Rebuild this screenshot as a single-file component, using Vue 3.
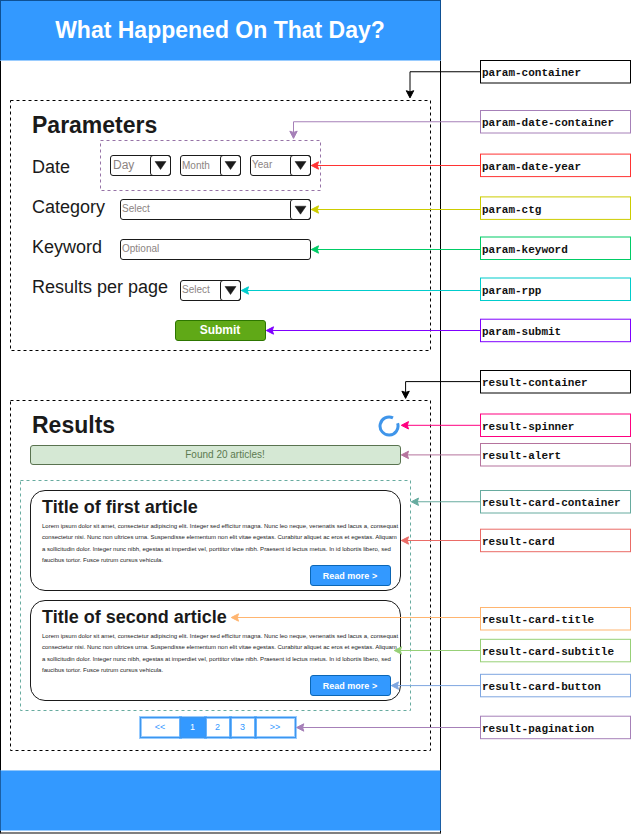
<script setup>
const lorem = [
  'Lorem ipsum dolor sit amet, consectetur adipiscing elit. Integer sed efficitur magna. Nunc leo neque, venenatis sed lacus a, consequat',
  'consectetur nisi. Nunc non ultrices urna. Suspendisse elementum non elit vitae egestas. Curabitur aliquet ac eros et egestas. Aliquam',
  'a sollicitudin dolor. Integer nunc nibh, egestas at imperdiet vel, porttitor vitae nibh. Praesent id lectus metus. In id lobortis libero, sed',
  'faucibus tortor. Fusce rutrum cursus vehicula.',
]
const articles = ['Title of first article', 'Title of second article']
const pages = [
  { text: '<<', cls: 'wide' },
  { text: '1', cls: 'on' },
  { text: '2', cls: '' },
  { text: '3', cls: '' },
  { text: '>>', cls: 'wide' },
]

// top: callout box, base: text baseline, y: connector height, x: arrow tip, down: tip height of a bent connector
const notes = [
  { name: 'param-container', color: '#000000', top: 60.5, base: 76, y: 71.75, x: 410, down: 98.5 },
  { name: 'param-date-container', color: '#a680b8', top: 110.5, base: 126, y: 121.75, x: 293.5, down: 139 },
  { name: 'param-date-year', color: '#ff3333', top: 154.1, base: 170, y: 165.5, x: 311.5 },
  { name: 'param-ctg', color: '#cccc00', top: 196.9, base: 213, y: 209.5, x: 311.5 },
  { name: 'param-keyword', color: '#00cc66', top: 237, base: 253, y: 249.5, x: 311.5 },
  { name: 'param-rpp', color: '#00cccc', top: 278, base: 294, y: 290.5, x: 241.5 },
  { name: 'param-submit', color: '#7f00ff', top: 319.2, base: 335, y: 330.5, x: 266.5 },
  { name: 'result-container', color: '#000000', top: 370.5, base: 386, y: 381.6, x: 405.6, down: 399 },
  { name: 'result-spinner', color: '#ff0080', top: 414, base: 430, y: 425.3, x: 401.5 },
  { name: 'result-alert', color: '#b5739d', top: 443.5, base: 459, y: 454.9, x: 401.5 },
  { name: 'result-card-container', color: '#67ab9f', top: 490.5, base: 506, y: 501.75, x: 411.5 },
  { name: 'result-card', color: '#ea6b66', top: 529.2, base: 545, y: 540.5, x: 401.5 },
  { name: 'result-card-title', color: '#ffb570', top: 607.5, base: 623, y: 617.5, x: 231.5 },
  { name: 'result-card-subtitle', color: '#97d077', top: 639.3, base: 655, y: 650.5, x: 394.5 },
  { name: 'result-card-button', color: '#7ea6e0', top: 674.3, base: 690, y: 685.6, x: 391.5 },
  { name: 'result-pagination', color: '#a680b8', top: 716.2, base: 732, y: 727.5, x: 296.8 },
]
const gapBefore = (i) => (i === 0 ? notes[0].base - 11 : notes[i].base - notes[i - 1].base - 16)
const line = (n) => (n.down ? `M480 ${n.y}H${n.x}V${n.down - 5}` : `M480 ${n.y}H${n.x + 5}`)
const head = (n) =>
  n.down
    ? `M${n.x} ${n.down - 0.6}l-3.7 -7.2l3.7 1.2l3.7 -1.2z`
    : `M${n.x - 0.2} ${n.y}l7.2 -3.7l-1.2 3.7l1.2 3.7z`
</script>

<template>
  <div class="sheet">
    <main class="mock">
      <header><h1>What Happened On That Day?</h1></header>

      <section class="panel params">
        <svg class="dash"><rect x=".5" y=".5" width="420" height="250" /></svg>
        <h2>Parameters</h2>
        <div class="row date">
          <label>Date</label>
          <div class="dates">
            <svg class="dash purple"><rect x=".5" y=".5" width="220" height="50" /></svg>
            <div class="field short day"><span>Day</span><i><svg viewBox="0 0 21 21"><path d="M5 6.5H16L10.5 14.5Z" /></svg></i></div>
            <div class="field short month"><span>Month</span><i><svg viewBox="0 0 21 21"><path d="M5 6.5H16L10.5 14.5Z" /></svg></i></div>
            <div class="field short year"><span>Year</span><i><svg viewBox="0 0 21 21"><path d="M5 6.5H16L10.5 14.5Z" /></svg></i></div>
          </div>
        </div>
        <div class="row">
          <label class="mid">Category</label>
          <div class="field long"><span>Select</span><i><svg viewBox="0 0 21 21"><path d="M5 7.2H16L10.5 15.2Z" /></svg></i></div>
        </div>
        <div class="row">
          <label class="mid">Keyword</label>
          <div class="field long"><span>Optional</span></div>
        </div>
        <div class="row rpp">
          <label>Results per page</label>
          <div class="field short"><span>Select</span><i><svg viewBox="0 0 21 21"><path d="M5 6.5H16L10.5 14.5Z" /></svg></i></div>
        </div>
        <button class="submit">Submit</button>
      </section>

      <section class="panel results">
        <svg class="dash"><rect x=".5" y=".5" width="420" height="350" /></svg>
        <div class="heading">
          <h2>Results</h2>
          <svg class="spinner" viewBox="0 0 22 22"><path d="M15 2.9A9 9 0 1 0 19.6 8.2" /></svg>
        </div>
        <div class="alert">Found 20 articles!</div>
        <div class="cards">
          <svg class="dash green"><rect x=".5" y=".5" width="390" height="230" /></svg>
          <article v-for="a in articles" :key="a">
            <h3>{{ a }}</h3>
            <p><span v-for="(l, i) in lorem" :key="i" :class="'l' + i">{{ l }}</span></p>
            <button>Read more &gt;</button>
          </article>
        </div>
        <nav>
          <a v-for="p in pages" :key="p.text" :class="p.cls">{{ p.text }}</a>
        </nav>
      </section>

      <footer></footer>
    </main>

    <aside>
      <div v-for="(n, i) in notes" :key="n.name" class="note" :style="{ marginTop: gapBefore(i) + 'px' }">{{ n.name }}</div>
    </aside>

    <svg class="wires" viewBox="0 0 631 834">
      <g v-for="n in notes" :key="n.name" :stroke="n.color">
        <rect x="480.5" :y="n.top" width="150" height="22.5" fill="none" />
        <path :d="line(n)" fill="none" />
        <path :d="head(n)" :fill="n.color" />
      </g>
    </svg>
  </div>
</template>

<style>
body { background: #fff; }
</style>

<style scoped>
* { box-sizing: border-box; margin: 0; padding: 0; }
.sheet { position: relative; width: 631px; height: 834px; display: flex; overflow: hidden; font-family: "Liberation Sans", Arial, sans-serif; color: #1a1a1a; }
.mock { width: 441px; height: 834px; border: solid #000; border-width: 0 1px; border-bottom: 2px solid #808080; display: flex; flex-direction: column; }
header { height: 61px; margin: 0 -1px; border: 1px solid #0e5093; border-bottom-color: #99ccff; background: #3399ff; padding: 16px 1px 0 0; text-align: center; flex: none; }
h1 { font-size: 23px; line-height: 26px; color: #fff; }
h2 { font-size: 23px; line-height: 26px; }
.panel { position: relative; width: 421px; margin-left: 9px; flex: none; }
.dash { position: absolute; left: 0; top: 0; width: 100%; height: 100%; fill: none; stroke: #000; stroke-dasharray: 3 3; }
.purple { stroke: #9673a6; }
.green { stroke: #67ab9f; }
.params { height: 251px; margin-top: 39px; padding: 12px 0 0 22px; }
.row { display: flex; height: 40px; }
.date { height: 51px; margin-top: 2px; }
label { width: 68px; font-size: 18px; line-height: 20px; padding-top: 17px; white-space: nowrap; flex: none; }
.row:not(.date) label { padding-top: 6px; }
label.mid { width: 88px; }
.rpp label { width: 148px; }
.dates { position: relative; width: 221px; height: 51px; padding: 15px 10px; display: flex; gap: 9px; }
.field { height: 21px; border: 1px solid #1a1a1a; border-radius: 3px; display: flex; justify-content: space-between; font-size: 10px; line-height: 12px; color: #8c8482; }
.row > .field { margin-top: 8px; }
.rpp > .field { margin-top: 9px; }
.field span { padding: 3px 0 0 1px; }
.short { width: 61px; }
.long { width: 191px; }
.day span { font-size: 12px; line-height: 14px; padding: 2px 0 0 2px; }
.month span { padding-top: 4px; }
.rpp .field span { padding-top: 3px; }
.field i { width: 21px; height: 21px; margin: -1px; border: 1px solid #1a1a1a; border-radius: 3px; flex: none; }
.field i svg { display: block; width: 21px; height: 21px; margin: -1px; fill: #1a1a1a; stroke: #1a1a1a; stroke-width: .5; }
button { font-family: inherit; font-weight: bold; color: #fff; border-radius: 3px; display: block; }
.submit { width: 91px; height: 21px; margin: 9px 0 0 143px; background: #60a917; border: 1px solid #2d7600; font-size: 12px; line-height: 18px; padding: 0 1px 1px 0; }
.results { height: 351px; margin-top: 49px; padding: 12px 0 0 10px; }
.heading { display: flex; height: 33px; padding-left: 10px; }
.heading h2 { padding-left: 2px; width: 348px; }
.spinner { width: 22px; height: 22px; margin: 2.5px 0 0 .4px; fill: none; stroke: #3f95ea; stroke-width: 3; }
.alert { width: 371px; height: 20px; margin-left: 10px; border: 1px solid #5a7350; border-radius: 3px; background: #d5e8d4; color: #5c7a50; font-size: 10px; line-height: 17px; text-align: center; padding-left: 19px; }
.cards { position: relative; width: 391px; height: 231px; margin-top: 15px; padding: 10px; display: flex; flex-direction: column; gap: 9px; }
article { width: 371px; height: 101px; border: 1px solid #1a1a1a; border-radius: 15px; padding: 6px 0 0 11px; flex: none; }
h3 { font-size: 18px; line-height: 20px; }
p { font-size: 6px; line-height: 11px; height: 48px; padding-top: 4px; }
p span { display: block; white-space: nowrap; }
p .l2 { margin-top: 1px; }
article button { width: 81px; height: 21px; margin-left: 268px; background: #3399ff; border: 1px solid #0b66b5; font-size: 9px; line-height: 19px; padding: 1px 1px 0 0; }
nav { display: flex; margin: 6px 0 0 120px; }
nav a { width: 26px; height: 21px; margin-right: -1px; border: 1px solid #3d96ee; box-shadow: 0 0 0 1px #3399ff80, inset 0 0 0 1px #3399ff80; font-size: 9px; line-height: 19px; padding-right: 1px; text-align: center; color: #3399ff; }
nav .wide { width: 41px; }
nav .on { background: #3399ff; color: #fff; }
footer { flex: none; height: 61px; margin: 19px -1px 0; border: solid #1b5fa5; border-width: 0 1px; background: #3399ff; box-shadow: inset 0 1px #8fc6fb, inset 0 -1px #99ccff; }
aside { width: 151px; margin-left: 39px; }
.note { height: 16px; padding-left: 2px; font: bold 11px/16px "Liberation Mono", monospace; white-space: nowrap; color: #111; }
.wires { position: absolute; left: 0; top: 0; width: 631px; height: 834px; pointer-events: none; }
</style>
